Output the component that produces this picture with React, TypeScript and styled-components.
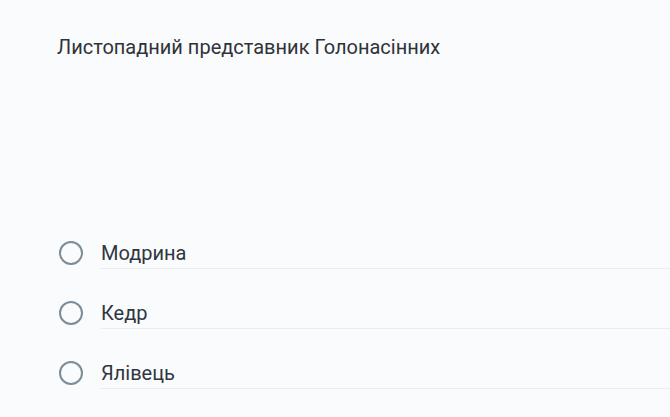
import React from "react";
import styled, { createGlobalStyle } from "styled-components";

const Global = createGlobalStyle`
  html, body { margin: 0; padding: 0; background: #fafbfd; }
  body { font-family: Roboto, "Noto Sans", sans-serif; }
`;

const Page = styled.div`
  width: 670px;
  height: 417px;
  box-sizing: border-box;
  padding: 36px 0 0 57px;
  background: #fafbfd;
  overflow: hidden;
`;

const Question = styled.div`
  font-size: 20px;
  line-height: 22px;
  color: #2f3338;
  margin-bottom: 180px;
`;

const Options = styled.div`
  display: flex;
  flex-direction: column;
`;

const Option = styled.label`
  display: flex;
  align-items: flex-start;
  height: 60px;
  cursor: pointer;
`;

const Circle = styled.span`
  width: 20px;
  height: 20px;
  border: 2.5px solid #7b8d97;
  border-radius: 50%;
  flex: none;
  margin: 3px 18px 0 2px;
`;

const Label = styled.span`
  flex: 1;
  font-size: 20px;
  line-height: 30px;
  height: 31px;
  color: #2f3640;
  border-bottom: 1px solid #eaedf0;
  box-sizing: border-box;
`;

const options = ["Модрина", "Кедр", "Ялівець"];

export default function App() {
  return (
    <Page>
      <Global />
      <Question>Листопадний представник Голонасінних</Question>
      <Options>
        {options.map((o) => (
          <Option key={o}>
            <Circle />
            <Label>{o}</Label>
          </Option>
        ))}
      </Options>
    </Page>
  );
}
